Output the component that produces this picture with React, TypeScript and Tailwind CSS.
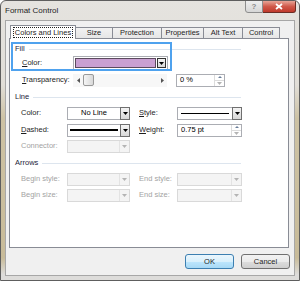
import type { ReactNode } from 'react';

// small black (or grey) arrow used in combo buttons
function Caret({ disabled }: { disabled?: boolean }) {
  return (
    <svg width="5" height="3" viewBox="0 0 5 3">
      <path d="M0 0h5L2.5 3z" fill={disabled ? '#b4b4b4' : '#000'} />
    </svg>
  );
}

function Combo({
  w,
  disabled,
  children,
}: {
  w: string;
  disabled?: boolean;
  children?: ReactNode;
}) {
  if (disabled) {
    return (
      <div className={`${w} h-[13px] flex border border-[#d9d9d9] bg-[#f4f4f4]`}>
        <div className="flex-1" />
        <div className="w-[10px] flex items-center justify-center border-l border-[#e3e3e3]">
          <Caret disabled />
        </div>
      </div>
    );
  }
  return (
    <div className={`${w} h-[13px] flex border border-[#abadb3] bg-white`}>
      <div className="flex-1 flex items-center justify-center min-w-0">{children}</div>
      <div className="w-[10px] -my-px -mr-px flex items-center justify-center border border-[#6f6f6f] bg-[linear-gradient(#f4f4f4,#d8d8d8)]">
        <Caret />
      </div>
    </div>
  );
}

function Spinner({ w, value }: { w: string; value: string }) {
  return (
    <div className={`${w} h-[13px] flex border border-[#abadb3] bg-white`}>
      <div className="flex-1 pl-[3px] flex items-center text-[7.5px] text-black">{value}</div>
      <div className="w-[10px] flex flex-col border-l border-[#dcdcdc]">
        <div className="flex-1 flex items-center justify-center border-b border-[#dcdcdc]">
          <svg width="4" height="2" viewBox="0 0 4 2">
            <path d="M0 2h4L2 0z" fill="#6b7f9a" />
          </svg>
        </div>
        <div className="flex-1 flex items-center justify-center">
          <Caret disabled />
        </div>
      </div>
    </div>
  );
}

function GroupHeader({ title, mt }: { title: string; mt: string }) {
  return (
    <div className={`${mt} h-[12px] w-[226px] ml-[5px] flex items-center gap-[4px]`}>
      <span className="text-[7.5px] text-[#1d1d3a]">{title}</span>
      <div className="flex-1 h-px bg-[#dde5ee]" />
    </div>
  );
}

function Label({ text, u, disabled, w }: { text: string; u?: boolean; disabled?: boolean; w: string }) {
  return (
    <span className={`${w} text-[7.5px] ${disabled ? 'text-[#a3a3a3]' : 'text-[#1e1e1e]'}`}>
      {u ? (
        <>
          <span className="underline">{text[0]}</span>
          {text.slice(1)}
        </>
      ) : (
        text
      )}
    </span>
  );
}

const tabs = ['Size', 'Protection', 'Properties', 'Alt Text', 'Control'];
const tabW = ['w-[37px]', 'w-[49px]', 'w-[42px]', 'w-[39px]', 'w-[37px]'];

export default function App() {
  return (
    <div
      className="w-[300px] h-[281px] flex flex-col border border-[#5e5e5e] rounded-t-[6px] overflow-hidden bg-[linear-gradient(to_bottom,#e5e3df_0%,#e1ded8_30%,#cdc2a4_42%,#c8bb99_92%,#dddcda_98%)]"
      style={{ fontFamily: '"Liberation Sans", Arial, sans-serif' }}
    >
      {/* title bar */}
      <div className="h-[19px] flex items-start shrink-0">
        <span className="pl-[4px] pt-[5px] text-[8px] text-[#1e1e1e] leading-[10px]">Format Control</span>
        <div className="ml-auto mr-[3px] flex">
          <div className="w-[18px] h-[13px] -mt-px flex items-center justify-center border border-[#8d8d8d] rounded-bl-[3px] bg-[linear-gradient(#eeeeee,#d6d6d6)] text-[8px] font-bold text-[#8a8a8a]">
            ?
          </div>
          <div className="w-[33px] h-[13px] -mt-px flex items-center justify-center border border-l-0 border-[#6b2c24] rounded-br-[3px] bg-[linear-gradient(#e8a597,#d0594a_50%,#c0392b)]">
            <svg width="8" height="7" viewBox="0 0 8 7">
              <path d="M1 1l6 5M7 1L1 6" stroke="#fff" strokeWidth="1.8" />
            </svg>
          </div>
        </div>
      </div>

      {/* client area */}
      <div className="mx-[4px] h-[256px] flex flex-col bg-[#f0f0f0] border border-[#a7a7a7]">
        {/* tabs */}
        <div className="pt-[4px] pl-[4px] flex items-end h-[18px] relative z-10 -mb-px">
          <div className="w-[66px] h-[14px] flex items-center justify-center bg-white border border-b-0 border-[#898c95]">
            <span className="px-[1px] text-[7.5px] text-[#1e1e1e] leading-[9px] outline outline-1 outline-dotted outline-[#222]">
              Colors and Lines
            </span>
          </div>
          {tabs.map((t, i) => (
            <div
              key={t}
              className={`${tabW[i]} h-[12px] flex items-center justify-center border border-l-0 border-[#898c95] bg-[linear-gradient(#f2f2f2,#e6e6e6)] text-[7.5px] text-[#1e1e1e]`}
            >
              {t}
            </div>
          ))}
        </div>

        {/* tab panel */}
        <div className="ml-[3px] mr-[5px] h-[210px] bg-white border border-[#898c95] relative flex flex-col">
          {/* focus highlight around the Fill group */}
          <div className="absolute left-[1px] top-[3px] w-[161px] h-[29px] border-2 border-[#4fa2ee]" />

          <GroupHeader title="Fill" mt="mt-[4px]" />
          <div className="mt-[1px] h-[14px] flex items-center ml-[12px]">
            <Label text="Color:" u w="w-[51px]" />
            <div className="w-[95px] h-[14px] flex border border-[#abadb3] bg-white">
              <div className="flex-1 m-[1px] border border-[#5b4a5e] bg-[#c9a0d2]" />
              <div className="w-[9px] my-[1px] mr-[1px] flex items-center justify-center border border-[#333] bg-[linear-gradient(#f4f4f4,#d8d8d8)]">
                <Caret />
              </div>
            </div>
          </div>
          <div className="mt-[3px] h-[14px] flex items-center ml-[12px]">
            <Label text="Transparency:" u w="w-[51px]" />
            <div className="w-[94px] h-[13px] flex items-center bg-[#f7f7f7]">
              <div className="w-[10px] flex justify-center">
                <svg width="3" height="5" viewBox="0 0 3 5">
                  <path d="M3 0v5L0 2.5z" fill="#555" />
                </svg>
              </div>
              <div className="w-[11px] h-[12px] rounded-[2px] border border-[#999] bg-[linear-gradient(to_right,#f5f5f5,#d9d9d9)]" />
              <div className="flex-1" />
              <div className="w-[10px] flex justify-center">
                <svg width="3" height="5" viewBox="0 0 3 5">
                  <path d="M0 0v5L3 2.5z" fill="#555" />
                </svg>
              </div>
            </div>
            <div className="ml-[9px]">
              <Spinner w="w-[49px]" value="0 %" />
            </div>
          </div>

          <GroupHeader title="Line" mt="mt-[4px]" />
          <div className="mt-[3px] h-[14px] flex items-center ml-[11px]">
            <Label text="Color:" w="w-[46px]" />
            <Combo w="w-[63px]">
              <span className="text-[7.5px] text-black">No Line</span>
            </Combo>
            <Label text="Style:" u w="w-[38px] ml-[9px]" />
            <Combo w="w-[65px]">
              <div className="w-full mx-[3px] h-px bg-black" />
            </Combo>
          </div>
          <div className="mt-[3px] h-[14px] flex items-center ml-[11px]">
            <Label text="Dashed:" u w="w-[46px]" />
            <Combo w="w-[63px]">
              <div className="w-full mx-[2px] h-[2px] bg-black" />
            </Combo>
            <Label text="Weight:" u w="w-[38px] ml-[9px]" />
            <Spinner w="w-[65px]" value="0.75 pt" />
          </div>
          <div className="mt-[2px] h-[14px] flex items-center ml-[11px]">
            <Label text="Connector:" disabled w="w-[46px]" />
            <Combo w="w-[63px]" disabled />
          </div>

          <GroupHeader title="Arrows" mt="mt-[4px]" />
          <div className="mt-[3px] h-[14px] flex items-center ml-[11px]">
            <Label text="Begin style:" disabled w="w-[46px]" />
            <Combo w="w-[63px]" disabled />
            <Label text="End style:" disabled w="w-[38px] ml-[9px]" />
            <Combo w="w-[65px]" disabled />
          </div>
          <div className="mt-[2px] h-[14px] flex items-center ml-[11px]">
            <Label text="Begin size:" disabled w="w-[46px]" />
            <Combo w="w-[63px]" disabled />
            <Label text="End size:" disabled w="w-[38px] ml-[9px]" />
            <Combo w="w-[65px]" disabled />
          </div>
        </div>

        {/* buttons */}
        <div className="mt-[6px] pr-[4px] flex justify-end gap-[7px]">
          <button className="w-[49px] h-[15px] rounded-[3px] border border-[#3c7fb1] bg-[linear-gradient(#eaf6fd,#d9f0fc_50%,#bee6fd_51%,#a7d9f5)] text-[7.5px] text-[#1e1e1e]">
            OK
          </button>
          <button className="w-[49px] h-[15px] rounded-[3px] border border-[#707070] bg-[linear-gradient(#f2f2f2,#ebebeb_50%,#dddddd_51%,#cfcfcf)] text-[7.5px] text-[#1e1e1e]">
            Cancel
          </button>
        </div>
      </div>
    </div>
  );
}
